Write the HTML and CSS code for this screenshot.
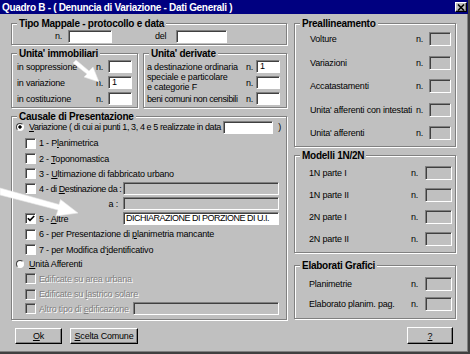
FILE: index.html
```html
<!DOCTYPE html>
<html>
<head>
<meta charset="utf-8">
<link rel="stylesheet" href="styles.css">
</head>
<body>
<div class="window">
  <div class="titlebar">
    <span class="title-text">Quadro B - ( Denuncia di Variazione - Dati Generali )</span>
    <span class="close-btn"><svg width="8" height="7" viewBox="0 0 8 7"><path d="M1 0.5 L7 6.5 M7 0.5 L1 6.5" stroke="#000" stroke-width="1.6"/></svg></span>
  </div>
  <div class="client">
    <div class="col-left">
      <div class="group g-tipo">
        <div class="legend">Tipo Mappale - protocollo e data</div>
        <div class="tipo-row">
          <span class="lbl-n">n.</span><span class="field w44"></span>
          <span class="lbl-del">del</span><span class="field w51"></span>
        </div>
      </div>
      <div class="unita-row">
        <div class="group g-imm">
          <div class="legend">Unita' immobiliari</div>
          <div class="rows imm-rows">
            <span>in soppressione</span><span>n.</span><span class="field"></span>
            <span>in variazione</span><span>n.</span><span class="field">1</span>
            <span>in costituzione</span><span>n.</span><span class="field"></span>
          </div>
        </div>
        <div class="group g-der">
          <div class="legend">Unita' derivate</div>
          <div class="rows der-rows">
            <span>a destinazione ordinaria</span><span>n.</span><span class="field">1</span>
            <span class="two-line">speciale e particolare<br>e categorie F</span><span>n.</span><span class="field"></span>
            <span class="tight">beni comuni non censibili</span><span>n.</span><span class="field"></span>
          </div>
        </div>
      </div>
      <div class="group g-causale">
        <div class="legend legend-tight">Causale di Presentazione</div>
        <div class="crow h16 radio-row">
          <span class="radio on"></span>
          <span class="grow var-lbl"><u>V</u>ariazione ( di cui ai punti 1, 3, 4 e 5 realizzate in data</span>
          <span class="field w50"></span>
          <span class="paren">)</span>
        </div>
        <div class="crow h16"><span class="cb"></span><span>1 - P<u>l</u>animetrica</span></div>
        <div class="crow h15"><span class="cb"></span><span>2 - <u>T</u>oponomastica</span></div>
        <div class="crow h15"><span class="cb"></span><span>3 - <u>U</u>ltimazione di fabbricato urbano</span></div>
        <div class="crow h15 frow"><span class="cb"></span><span class="grow tight">4 - di <u>D</u>estinazione da :</span><span class="field off w156"></span></div>
        <div class="crow h15 frow"><span class="grow a-lbl">a :</span><span class="field off w156"></span></div>
        <div class="crow h15 frow"><span class="cb checked"><svg width="8" height="7" viewBox="0 0 8 7"><path d="M0.8 3.2 L3 5.4 L7.2 1" fill="none" stroke="#000" stroke-width="1.6"/></svg></span><span class="grow">5 - <u>A</u>ltre</span><span class="field w156 txt">DICHIARAZIONE DI PORZIONE DI U.I.</span></div>
        <div class="crow h16"><span class="cb"></span><span>6 - per Presentazione di <u>p</u>lanimetria mancante</span></div>
        <div class="crow h15"><span class="cb"></span><span>7 - per Modifica d'<u>i</u>dentificativo</span></div>
        <div class="crow h13"><span class="radio"></span><span><u>U</u>nità Afferenti</span></div>
        <div class="crow h17 dis"><span class="cb"></span><span>Edificate su area urbana</span></div>
        <div class="crow h14 dis"><span class="cb"></span><span>Edificate su <u>l</u>astrico solare</span></div>
        <div class="crow h15 dis frow"><span class="cb"></span><span class="grow">Altro tipo di <u>e</u>dificazione</span><span class="field off w146"></span></div>
      </div>
      <div class="btn-row">
        <span class="btn w47"><u>O</u>k</span>
        <span class="btn w68"><u>S</u>celta Comune</span>
      </div>
    </div>
    <div class="col-right">
      <div class="group g-pre">
        <div class="legend">Preallineamento</div>
        <div class="rows pre-rows">
          <span>Volture</span><span>n.</span><span class="field off"></span>
          <span>Variazioni</span><span>n.</span><span class="field off"></span>
          <span>Accatastamenti</span><span>n.</span><span class="field off"></span>
          <span>Unita' afferenti con intestati</span><span>n.</span><span class="field off"></span>
          <span>Unita' afferenti</span><span>n.</span><span class="field off"></span>
        </div>
      </div>
      <div class="group g-mod">
        <div class="legend">Modelli 1N/2N</div>
        <div class="rows mod-rows">
          <span>1N parte I</span><span>n.</span><span class="field off"></span>
          <span>1N parte II</span><span>n.</span><span class="field off"></span>
          <span>2N parte I</span><span>n.</span><span class="field off"></span>
          <span>2N parte II</span><span>n.</span><span class="field off"></span>
        </div>
      </div>
      <div class="group g-ela">
        <div class="legend">Elaborati Grafici</div>
        <div class="rows ela-rows">
          <span>Planimetrie</span><span>n.</span><span class="field off"></span>
          <span>Elaborato planim. pag.</span><span>n.</span><span class="field off"></span>
        </div>
      </div>
      <span class="btn help"><u>?</u></span>
    </div>
  </div>
  <svg class="arrows" width="470" height="354" viewBox="0 0 470 354">
    <polygon points="73,63 76,60 89,71 93,67 99,82 84,77 87,74" fill="#fff" stroke="#e8e8e8" stroke-width="0.6"/>
    <polygon points="0,188 59,204.5 60.5,199.5 78,213 56,216 58,210 0,195" fill="#fff" stroke="#e8e8e8" stroke-width="0.6"/>
  </svg>
</div>
</body>
</html>
```
FILE: styles.css
```css
* { box-sizing: border-box; }
html, body { margin: 0; padding: 0; }
body {
  width: 470px;
  height: 354px;
  overflow: hidden;
  background: #c0c0c0;
  font-family: "Liberation Sans", Arial, sans-serif;
  font-size: 9px;
  letter-spacing: -0.2px;
  color: #000;
}
u { text-decoration: underline; text-underline-offset: 1px; }
.window {
  position: relative;
  width: 470px;
  height: 354px;
  border-right: 2px solid #404040;
  border-bottom: 2px solid #404040;
  box-shadow: inset -1px -1px 0 #808080;
  display: flex;
  flex-direction: column;
}
.titlebar {
  height: 14px;
  flex: none;
  background: #000080;
  color: #fff;
  display: flex;
  align-items: center;
  justify-content: space-between;
  padding: 0 1px 0 2px;
  font-weight: bold;
  font-size: 10px;
  letter-spacing: -0.3px;
  white-space: nowrap;
}
.close-btn {
  width: 12px;
  height: 10px;
  background: #c0c0c0;
  border: 1px solid;
  border-color: #fff #000 #000 #fff;
  box-shadow: inset -1px -1px 0 #808080;
  display: flex;
  align-items: center;
  justify-content: center;
}
.client {
  display: flex;
  gap: 7px;
  padding: 9px 0 0 11px;
}
.col-left { width: 276px; display: flex; flex-direction: column; }
.col-right { width: 162px; display: flex; flex-direction: column; }

.group {
  border: 1px solid #808080;
  box-shadow: 1px 1px 0 #fff, inset 1px 1px 0 #fff;
  display: flex;
  flex-direction: column;
}
.legend {
  align-self: flex-start;
  margin: -6px 0 0 5px;
  padding: 0 2px;
  height: 11px;
  line-height: 11px;
  background: #c0c0c0;
  font-weight: bold;
  font-size: 10px;
  letter-spacing: -0.25px;
  white-space: nowrap;
}
.legend-tight { margin-bottom: -3px; }

.field {
  display: block;
  height: 13px;
  background: #fff;
  border: 1px solid;
  border-color: #808080 #fff #fff #808080;
  box-shadow: inset 1px 1px 0 #404040;
  padding-left: 3px;
  line-height: 11px;
  white-space: nowrap;
  overflow: hidden;
  flex: none;
}
.field.off { background: #c0c0c0; }
.w44 { width: 44px; }
.w50 { width: 50px; }
.w51 { width: 51px; }
.w146 { width: 146px; }
.w156 { width: 156px; }

/* Tipo mappale */
.g-tipo { height: 22px; }
.tipo-row {
  display: flex;
  align-items: center;
  height: 14px;
  padding-left: 43px;
}
.lbl-n { width: 13px; }
.lbl-del { width: 21px; margin-left: 43px; }

/* unita */
.unita-row { display: flex; gap: 5px; margin-top: 8px; }
.g-imm { width: 127px; height: 55px; }
.g-der { width: 144px; height: 55px; }
.rows {
  display: grid;
  align-items: center;
  white-space: nowrap;
}
.imm-rows {
  margin-top: 1px;
  grid-template-columns: 1fr 12px 24px;
  grid-auto-rows: 13px;
  row-gap: 3px;
  padding: 0 5px 0 5px;
}
.der-rows {
  margin-top: 1px;
  grid-template-columns: 1fr 10px 24px;
  grid-auto-rows: 13px;
  row-gap: 3px;
  padding: 0 6px 0 3px;
}
.two-line {
  line-height: 9.5px;
  margin: -3px 0;
}
.tight { letter-spacing: -0.4px; }

/* causale */
.g-causale { height: 204px; margin-top: 8px; }
.crow {
  display: flex;
  align-items: center;
  white-space: nowrap;
}
.h13 { height: 13px; }
.h14 { height: 14px; }
.h15 { height: 15px; }
.h16 { height: 16px; }
.h17 { height: 17px; }
.grow { flex: 1; overflow: hidden; }
.var-lbl { letter-spacing: -0.4px; }
.frow { padding-right: 7px; }
.a-lbl { text-align: right; padding-right: 5px; }
.radio-row { padding-right: 5px; }
.paren { margin-left: 5px; }
.txt { padding-left: 2px; letter-spacing: -0.5px; }
.cb {
  width: 11px;
  height: 11px;
  flex: none;
  margin: 0 3px 0 13px;
  background: #fff;
  border: 1px solid;
  border-color: #808080 #fff #fff #808080;
  box-shadow: inset 1px 1px 0 #404040;
  display: flex;
  align-items: center;
  justify-content: center;
}
.radio {
  width: 8px;
  height: 8px;
  flex: none;
  margin: 0 5px 0 4px;
  border-radius: 50%;
  border: 1px solid;
  border-color: #404040 #fff #fff #404040;
  background: #fff;
}
.radio.on { background: radial-gradient(circle, #000 0 1.4px, #fff 1.9px); }
.dis { color: #808080; text-shadow: 1px 1px 0 #fff; }
.dis .cb { background: #c0c0c0; }

/* buttons */
.btn-row { display: flex; gap: 8px; margin-top: 8px; padding-left: 4px; }
.btn {
  display: flex;
  align-items: center;
  justify-content: center;
  height: 16px;
  background: #c0c0c0;
  border: 1px solid;
  border-color: #fff #000 #000 #fff;
  box-shadow: inset -1px -1px 0 #808080;
  white-space: nowrap;
}
.w47 { width: 47px; }
.w68 { width: 68px; }
.help { width: 46px; height: 17px; margin-top: 8px; align-self: flex-end; margin-right: 3px; }

/* right column */
.g-pre { height: 124px; }
.pre-rows {
  margin-top: 3px;
  grid-template-columns: 1fr 13px 22px;
  grid-auto-rows: 14px;
  row-gap: 9.5px;
  padding: 0 4px 0 15px;
}
.g-mod { height: 98px; margin-top: 8px; }
.mod-rows {
  margin-top: 5px;
  grid-template-columns: 1fr 14px 27px;
  grid-auto-rows: 14px;
  row-gap: 8px;
  padding: 0 3px 0 14px;
}
.g-ela { height: 54px; margin-top: 12px; }
.ela-rows {
  margin-top: 6px;
  grid-template-columns: 1fr 14px 27px;
  grid-auto-rows: 14px;
  row-gap: 6px;
  padding: 0 3px 0 14px;
}
.rows .field { height: 14px; }
.imm-rows .field, .der-rows .field { height: 13px; }

.arrows { position: absolute; left: 0; top: 0; pointer-events: none; }
```
